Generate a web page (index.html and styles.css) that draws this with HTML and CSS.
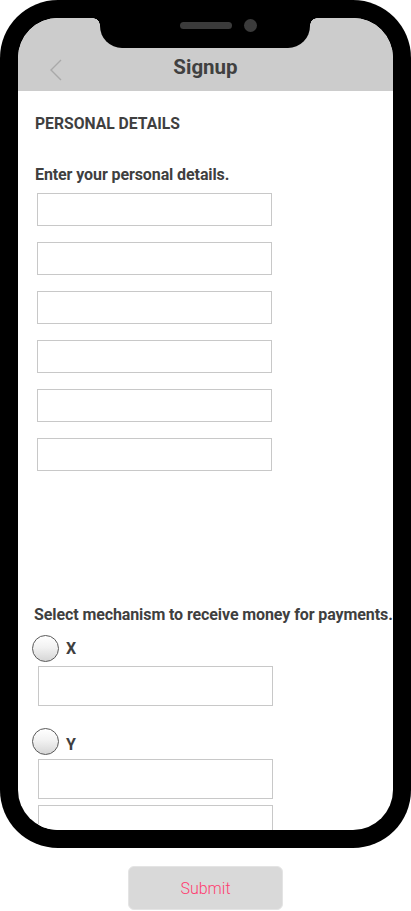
FILE: index.html
```html
<!DOCTYPE html>
<html lang="en">
<head>
<meta charset="utf-8">
<title>Signup</title>
<link rel="stylesheet" href="styles.css">
</head>
<body>
<div class="page">
  <div class="phone">
    <div class="screen">
      <div class="notch">
        <span class="speaker"></span>
        <span class="camera"></span>
      </div>
      <header class="header">
        <svg class="back" width="12" height="22" viewBox="0 0 12 22" aria-hidden="true">
          <path d="M11 1 L1 11 L11 21" fill="none" stroke="#a9a9a9" stroke-width="1.4"/>
        </svg>
        <h1 class="title">Signup</h1>
        <span></span>
      </header>
      <main class="content">
        <h2 class="section-title">PERSONAL DETAILS</h2>
        <p class="label label-intro">Enter your personal details.</p>
        <div class="fields">
          <div class="field"></div>
          <div class="field"></div>
          <div class="field"></div>
          <div class="field"></div>
          <div class="field"></div>
          <div class="field"></div>
        </div>
        <p class="label label-select">Select mechanism to receive money for payments.</p>
        <div class="option">
          <span class="radio"></span>
          <span class="option-name">X</span>
        </div>
        <div class="field field-tall"></div>
        <div class="option option-y">
          <span class="radio"></span>
          <span class="option-name">Y</span>
        </div>
        <div class="field field-tall"></div>
        <div class="field field-tall field-last"></div>
      </main>
    </div>
  </div>
  <button class="submit" type="button">Submit</button>
</div>
</body>
</html>
```

FILE: styles.css
```css
* { box-sizing: border-box; }

html, body {
  margin: 0;
  padding: 0;
  background: #fff;
}

body {
  font-family: Roboto, "Liberation Sans", Arial, sans-serif;
  color: #3f3f3f;
}

.page {
  width: 411px;
  display: flex;
  flex-direction: column;
  align-items: center;
}

.phone {
  width: 411px;
  height: 848px;
  background: #000;
  border-radius: 58px;
  padding: 18px;
}

.screen {
  position: relative;
  height: 812px;
  background: #fff;
  border-radius: 40px;
  overflow: hidden;
}

.notch {
  position: absolute;
  top: 0;
  left: 82px;
  width: 210px;
  height: 30px;
  background: #000;
  border-radius: 0 0 22px 22px;
  z-index: 2;
}

.notch::before,
.notch::after {
  content: "";
  position: absolute;
  top: 0;
  width: 7px;
  height: 7px;
}

.notch::before {
  left: -7px;
  background: radial-gradient(circle at 0 100%, transparent 6.5px, #000 7px);
}

.notch::after {
  right: -7px;
  background: radial-gradient(circle at 100% 100%, transparent 6.5px, #000 7px);
}

.speaker {
  position: absolute;
  left: 80px;
  top: 4px;
  width: 52px;
  height: 7px;
  border-radius: 4px;
  background: #3b3b3b;
}

.camera {
  position: absolute;
  left: 144px;
  top: 1px;
  width: 13px;
  height: 13px;
  border-radius: 50%;
  background: #3b3b3b;
}

.header {
  height: 73px;
  background: #cccccc;
  display: grid;
  grid-template-columns: 1fr auto 1fr;
  align-items: start;
  padding-top: 37px;
}

.back {
  margin-left: 32px;
  margin-top: 4px;
}

.title {
  margin: 0;
  font-size: 20.5px;
  line-height: 24px;
  font-weight: 700;
  color: #404040;
}

.content {
  padding-left: 17px;
}

.section-title {
  margin: 23px 0 0;
  font-size: 15.7px;
  line-height: 20px;
  font-weight: 700;
  color: #3f3f3f;
}

.label {
  margin: 0;
  font-size: 16px;
  line-height: 20px;
  font-weight: 700;
  color: #3f3f3f;
  white-space: nowrap;
  letter-spacing: -0.1px;
}

.label-intro {
  margin-top: 31px;
}

.fields {
  display: flex;
  flex-direction: column;
  gap: 16px;
  margin-top: 8px;
}

.field {
  width: 235px;
  height: 33px;
  margin-left: 2px;
  border: 1px solid #c8c8c8;
  background: #fff;
}

.label-select {
  margin-top: 134px;
  margin-left: -1px;
}

.option {
  display: flex;
  align-items: center;
  gap: 7px;
  margin-top: 10px;
  margin-left: -3px;
  height: 27px;
}

.option-y {
  margin-top: 21px;
  height: 28px;
}

.option-y .option-name {
  margin-top: 8px;
}

.radio {
  width: 27px;
  height: 27px;
  border-radius: 50%;
  border: 1.5px solid #595959;
  background: linear-gradient(#ffffff 0%, #f2f2f2 45%, #d6d6d6 100%);
}

.option-name {
  font-size: 16px;
  font-weight: 700;
  color: #3f3f3f;
  line-height: 20px;
}

.field-tall {
  height: 40px;
  margin-left: 3px;
  margin-top: 4px;
}

.field-last {
  margin-top: 6px;
}

.submit {
  margin-top: 18px;
  width: 155px;
  height: 44px;
  background: #d9d9d9;
  border: 1px solid #e4e4e4;
  border-radius: 6px;
  font-family: Roboto, "Liberation Sans", Arial, sans-serif;
  font-size: 16px;
  font-weight: 300;
  color: #ff3c70;
  padding: 0;
}
```
